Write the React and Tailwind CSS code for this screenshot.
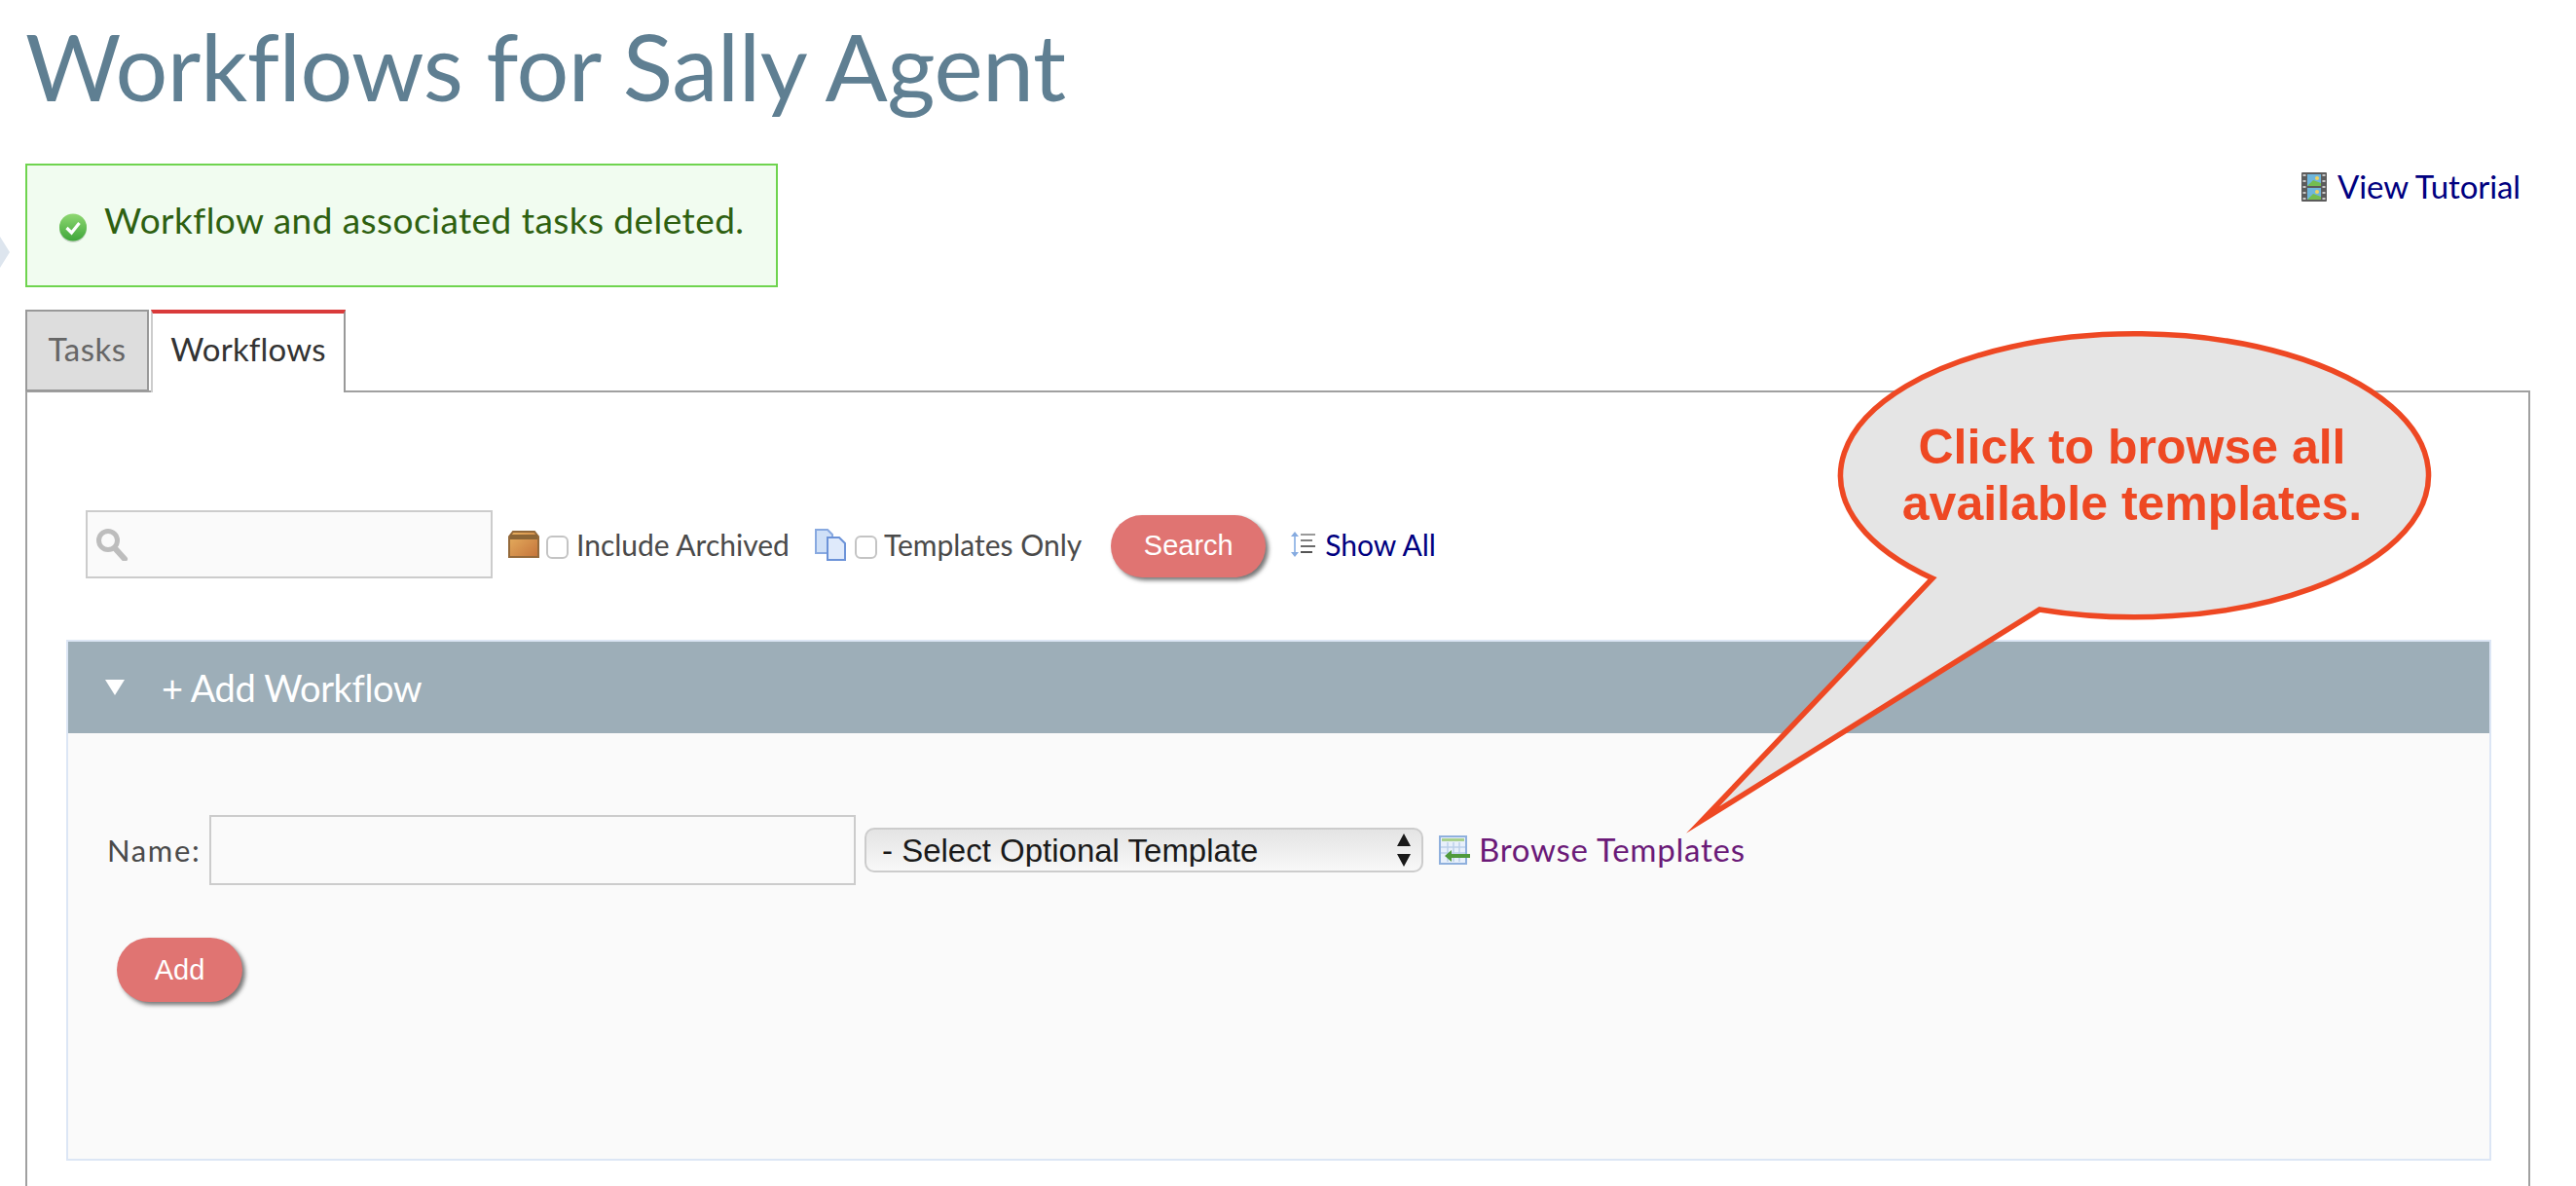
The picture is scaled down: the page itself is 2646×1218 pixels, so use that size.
const lato = "font-['Lato','Open_Sans',sans-serif]"

function CheckIcon() {
  return (
    <svg width="30" height="32" viewBox="0 0 30 32" className="shrink-0">
      <defs>
        <linearGradient id="ok" x1="0" y1="0" x2="0" y2="1">
          <stop offset="0" stopColor="#8fd872" />
          <stop offset="1" stopColor="#3fa63a" />
        </linearGradient>
      </defs>
      <circle cx="15" cy="17" r="14" fill="#9aa89a" opacity="0.45" />
      <circle cx="15" cy="15.5" r="14" fill="url(#ok)" />
      <path d="M8.5 16l5 5 8-10" fill="none" stroke="#fff" strokeWidth="3.2" />
    </svg>
  )
}

function FilmIcon() {
  return (
    <svg width="26" height="30" viewBox="0 0 26 30" className="shrink-0">
      <rect width="26" height="30" rx="1" fill="#5c5c5c" />
      <rect x="6" y="2" width="14" height="12" fill="#6fb6dc" />
      <rect x="6" y="16" width="14" height="12" fill="#6fb6dc" />
      <path d="M6 14l6-6 8 3v3zM6 28l6-6 8 3v3z" fill="#74bd50" />
      <circle cx="16" cy="6" r="2" fill="#f1d25f" />
      <circle cx="16" cy="20" r="2" fill="#f1d25f" />
      {[3, 9, 15, 21, 27].map((y) => (
        <g key={y}>
          <rect x="1.5" y={y - 1} width="3" height="2" fill="#c8c8c8" />
          <rect x="21.5" y={y - 1} width="3" height="2" fill="#c8c8c8" />
        </g>
      ))}
    </svg>
  )
}

function SearchGlass() {
  return (
    <svg width="34" height="34" viewBox="0 0 34 34" className="shrink-0">
      <circle cx="13" cy="13" r="9.5" fill="none" stroke="#bdbdbd" strokeWidth="5" />
      <path d="M20 21l10 11" stroke="#bdbdbd" strokeWidth="6" strokeLinecap="round" />
    </svg>
  )
}

function BoxIcon() {
  return (
    <svg width="32" height="28" viewBox="0 0 32 28" className="shrink-0">
      <defs>
        <linearGradient id="box" x1="0" y1="0" x2="1" y2="1">
          <stop offset="0" stopColor="#e8b261" />
          <stop offset="1" stopColor="#c4733a" />
        </linearGradient>
      </defs>
      <path d="M1 6l4-5h22l4 5v21H1z" fill="url(#box)" stroke="#94693a" strokeWidth="2" />
      <path d="M2 4h28v5H2z" fill="#8c6536" />
    </svg>
  )
}

function PagesIcon() {
  return (
    <svg width="33" height="33" viewBox="0 0 33 33" className="shrink-0">
      <path d="M1 1h12l5 5v19H1z" fill="#cfe0f7" stroke="#88a9e0" strokeWidth="2" />
      <path d="M13 9h12l6 6v17H13z" fill="#dfeafb" stroke="#6c93d8" strokeWidth="2" />
    </svg>
  )
}

function ListIcon() {
  return (
    <svg width="26" height="26" viewBox="0 0 26 26" className="shrink-0">
      <path d="M4 3v20" stroke="#9dbde8" strokeWidth="2" />
      <path d="M4 0l4 5H0zM4 26l4-5H0z" fill="#86abe0" />
      <path d="M10 3h15" stroke="#9a9a9a" strokeWidth="2" />
      <path d="M10 9h12" stroke="#7f7f7f" strokeWidth="2" />
      <path d="M10 15h15" stroke="#6a6a6a" strokeWidth="2" />
      <path d="M10 21h12" stroke="#555" strokeWidth="2" />
    </svg>
  )
}

function TableIcon() {
  return (
    <svg width="32" height="30" viewBox="0 0 32 30" className="shrink-0">
      <rect x="1" y="1" width="27" height="28" fill="#e8f0fb" stroke="#8fb0dd" strokeWidth="2" />
      <rect x="3" y="3" width="23" height="3" fill="#a9d08e" />
      <path d="M9 7v20M15 7v20M21 7v20M2 12h25M2 18h25" stroke="#bcd0ea" strokeWidth="1.5" />
      <path d="M6 21l7-6v4h19v4H13v4z" fill="#4f9a3c" />
    </svg>
  )
}

function PillButton({ children, className }) {
  return (
    <button className={`rounded-full bg-[#e07472] text-white text-[29px] font-['Liberation_Sans',sans-serif] shadow-[3px_3px_4px_#777] ${className}`}>
      {children}
    </button>
  )
}

function Checkbox() {
  return <span className="block w-[23px] h-[24px] shrink-0 rounded-[6px] border-2 border-[#c4c4c4] bg-white" />
}

export default function App() {
  return (
    <div className={`relative h-[1218px] w-[2646px] overflow-hidden bg-white ${lato}`}>
      <h1 className="ml-[26px] h-[168px] pt-[12px] text-[95px] leading-[110px] font-normal text-[#5f7f92] tracking-[-0.5px]">
        Workflows for Sally Agent
      </h1>

      <div className="flex justify-between pl-[26px] pr-[57px]">
        <div className="flex h-[127px] w-[773px] items-center border-2 border-[#6fd44f] bg-[#f1fcf0] pl-[32px] pb-[2px] text-[37px] text-[#2e6010]">
          <span className="mt-[6px]"><CheckIcon /></span>
          <span className="ml-[17px] -mt-[10px] tracking-[0.45px]">Workflow and associated tasks deleted.</span>
        </div>
        <a className="mt-[8px] flex h-[32px] items-center gap-[11px] text-[33px] text-[#000080]">
          <FilmIcon />
          <span className="tracking-[-0.1px]">View Tutorial</span>
        </a>
      </div>

      <div className="mt-[23px] ml-[26px] flex items-stretch h-[83px] text-[33px]">
        <div className="relative -mb-[1px] flex w-[127px] items-center justify-center border-2 border-[#999] bg-[#ddd] pb-[2px] text-[#666] tracking-[0.5px]">Tasks</div>
        <div className="relative z-10 -mb-[2px] ml-[2px] flex w-[200px] items-center justify-center border-t-[4px] border-t-[#d93a3a] border-l-2 border-l-[#ccc] border-r-2 border-r-[#999] bg-white pb-[8px] text-[#333] tracking-[0.2px]">Workflows</div>
      </div>

      <div className="ml-[26px] w-[2573px] h-[820px] border-2 border-b-0 border-[#a0a0a0] pt-[121px]">
        <div className="ml-[60px] flex h-[70px] items-center text-[30px] text-[#4a4a4a]">
          <div className="flex h-[70px] w-[418px] items-center border-2 border-[#ccc] bg-[#fafafa] pl-[8px]">
            <SearchGlass />
          </div>
          <span className="ml-[16px]"><BoxIcon /></span>
          <span className="ml-[7px] mt-[6px]"><Checkbox /></span>
          <span className="ml-[8px] tracking-[0px]">Include Archived</span>
          <span className="ml-[26px]"><PagesIcon /></span>
          <span className="ml-[8px] mt-[6px]"><Checkbox /></span>
          <span className="ml-[7px] tracking-[0px]">Templates Only</span>
          <PillButton className="ml-[30px] mt-[3px] h-[64px] w-[159px]">Search</PillButton>
          <span className="ml-[26px]"><ListIcon /></span>
          <a className="ml-[9px] text-[#000080] tracking-[0px]">Show All</a>
        </div>

        <div className="ml-[40px] mt-[63px] w-[2491px]">
          <div className="flex h-[96px] items-center border-2 border-b-0 border-[#dce6f5] bg-[#9daeb8] pl-[38px] text-white text-[38px]">
            <svg width="20" height="16" viewBox="0 0 20 16"><path d="M0 0h20L10 16z" fill="#fff" /></svg>
            <span className="ml-[38px] tracking-[-0.4px]">+ Add Workflow</span>
          </div>
          <div className="h-[439px] border-2 border-t-0 border-[#dce6f5] bg-[#fafafa] pt-[84px] pl-[40px]">
            <div className="flex h-[72px] items-center">
              <span className="w-[105px] text-[31px] text-[#4a4a4a] tracking-[1.6px]">Name:</span>
              <div className="h-[72px] w-[664px] border-2 border-[#ccc] bg-[#fafafa]" />
              <div className="relative ml-[9px] h-[46px] w-[574px]">
                <select className="h-full w-full appearance-none rounded-[10px] border-2 border-[#ccc] bg-gradient-to-b from-[#e4e4e4] to-[#f8f8f8] pl-[16px] font-['Liberation_Sans',sans-serif] text-[33px] text-[#1a1a1a] leading-none">
                  <option>- Select Optional Template</option>
                </select>
                <svg width="16" height="34" viewBox="0 0 16 34" className="absolute right-[12px] top-[6px]">
                  <path d="M8 0l7 13H1zM8 34l-7-13h14z" fill="#1a1a1a" />
                </svg>
              </div>
              <span className="ml-[16px]"><TableIcon /></span>
              <a className="ml-[9px] text-[33px] text-[#6b1a78] tracking-[0.75px]">Browse Templates</a>
            </div>
            <PillButton className="ml-[10px] mt-[54px] h-[66px] w-[129px] pt-[2px]">Add</PillButton>
          </div>
        </div>
      </div>

      {/* edge marker at far left */}
      <svg width="10" height="32" viewBox="0 0 10 32" className="absolute left-0 top-[243px]">
        <path d="M0 0l10 16L0 32z" fill="#dde5ee" />
      </svg>

      {/* speech bubble callout */}
      <svg width="2646" height="1218" viewBox="0 0 2646 1218" className="absolute left-0 top-0 pointer-events-none">
        <path
          d="M2095 626 A302 145.5 0 1 0 1985 594 L1749 842 Z"
          fill="#e5e5e5"
          stroke="#ee4823"
          strokeWidth="5.5"
          strokeMiterlimit="30"
        />
        <text x="2190" y="476" textAnchor="middle" fill="#ee4823" fontFamily="Liberation Sans, sans-serif" fontWeight="700" fontSize="50">Click to browse all</text>
        <text x="2190" y="534" textAnchor="middle" fill="#ee4823" fontFamily="Liberation Sans, sans-serif" fontWeight="700" fontSize="50">available templates.</text>
      </svg>
    </div>
  )
}
